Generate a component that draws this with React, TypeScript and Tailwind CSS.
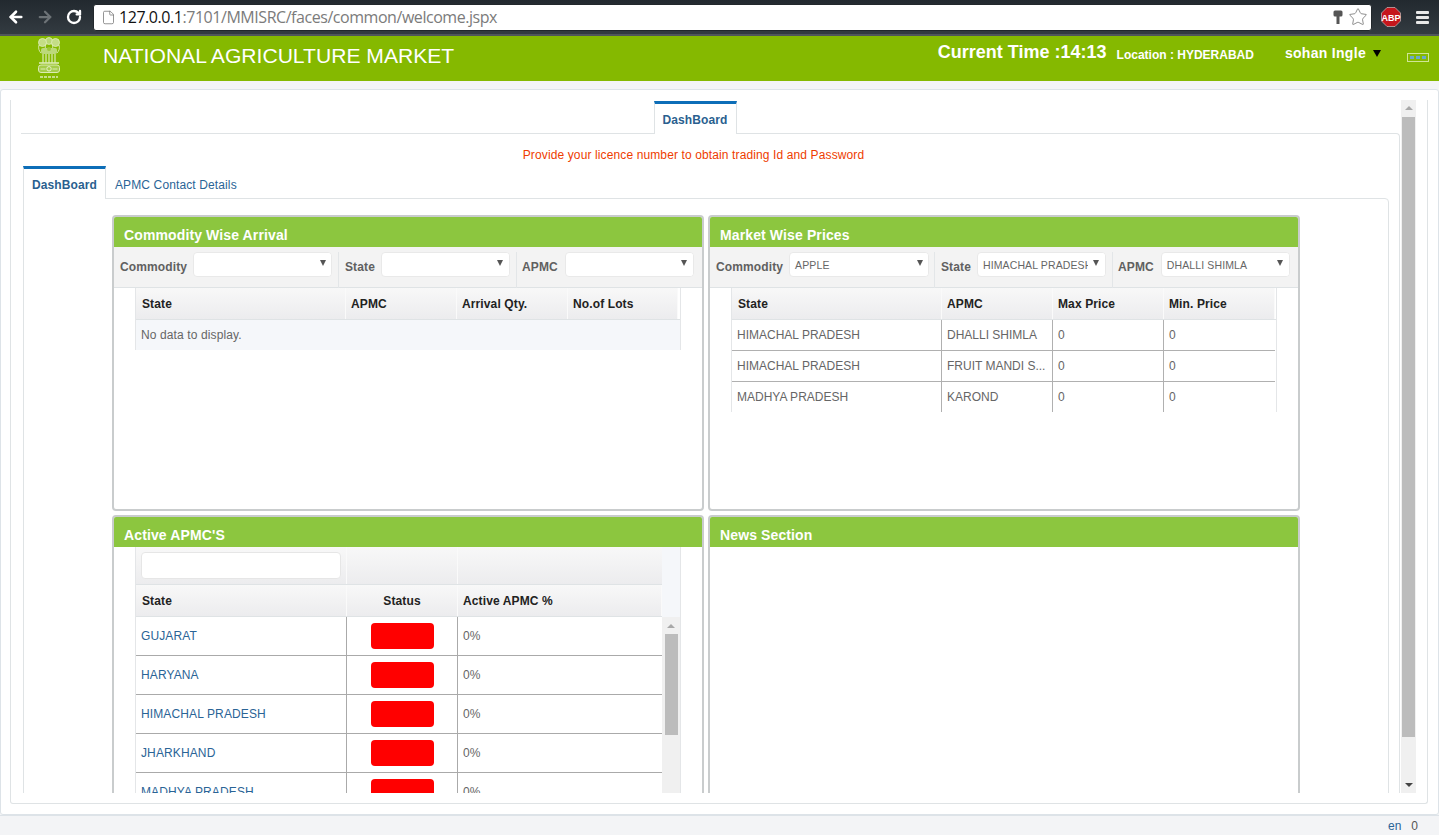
import React from 'react';
import { ArrowLeft, ArrowRight, RotateCw, File, Star } from 'lucide-react';

const priceRows = [
  ['HIMACHAL PRADESH', 'DHALLI SHIMLA', '0', '0'],
  ['HIMACHAL PRADESH', 'FRUIT MANDI S...', '0', '0'],
  ['MADHYA PRADESH', 'KAROND', '0', '0'],
];

const activeStates = ['GUJARAT', 'HARYANA', 'HIMACHAL PRADESH', 'JHARKHAND', 'MADHYA PRADESH'];

function Emblem() {
  return (
    <svg width="26" height="44" viewBox="0 0 26 44" fill="none" stroke="#dcebb4" strokeWidth="0.9">
      {/* lion heads */}
      <circle cx="13" cy="5" r="3.4" fill="#b9d775" />
      <circle cx="6.5" cy="6.5" r="4" fill="#c4dd86" />
      <circle cx="19.5" cy="6.5" r="4" fill="#c4dd86" />
      <path d="M3 9c-1 3 0 6 2 8M23 9c1 3 0 6-2 8M10 8c-1 2-1 4 0 6M16 8c1 2 1 4 0 6" />
      <rect x="5" y="12" width="16" height="6" rx="2" fill="#bcd97a" stroke="none" />
      <circle cx="13" cy="13" r="2" fill="#9cc63a" stroke="none" />
      {/* bodies */}
      <path d="M7 18v9M10 18v9M13 18v9M16 18v9M19 18v9" strokeWidth="1.2" />
      <path d="M3 27h20" strokeWidth="1.6" />
      {/* abacus */}
      <rect x="2.5" y="29" width="21" height="7.5" rx="2.5" fill="#a5cc4a" strokeWidth="1" />
      <circle cx="13" cy="32.8" r="2.2" stroke="#eef5d8" strokeWidth="0.9" />
      <path d="M4.5 33h5M16.5 33h5" strokeWidth="1.2" />
      {/* motto */}
      <path d="M4 41h18" stroke="#dcebb4" strokeWidth="1.4" strokeDasharray="3 1" />
    </svg>
  );
}

function ChromeBar() {
  return (
    <div className="flex h-[36px] items-center border-b-2 border-b-[#50565b] bg-gradient-to-b from-[#22292f] to-[#333b41]">
      <div className="ml-[7px] flex w-[86px] items-center">
        <ArrowLeft size={18} strokeWidth={3.5} className="text-white" />
        <ArrowRight size={18} strokeWidth={3} className="ml-[11px] text-[#6d7377]" />
        <RotateCw size={16} strokeWidth={3.5} className="ml-[12px] text-white" />
      </div>
      <div className="flex h-[27px] w-[1279px] items-center rounded-[3px] border border-[#22282c] bg-white pl-[7px] pr-[3px]">
        <File size={15} strokeWidth={1.25} className="text-[#777]" />
        <span className="ml-[3px] font-['Open_Sans',sans-serif] text-[16px] tracking-[-0.45px] text-[#7b7b7b]">
          <span className="text-[#111]">127.0.0.1</span>:7101/MMISRC/faces/common/welcome.jspx
        </span>
        <svg width="10" height="15" viewBox="0 0 10 15" className="ml-auto" fill="#555">
          <rect x="0.5" y="0.5" width="9" height="6" rx="1.5" />
          <rect x="3.5" y="6" width="3" height="8" />
        </svg>
        <Star size={20} strokeWidth={1} className="ml-[5px] text-[#777]" />
      </div>
      <svg width="20" height="20" viewBox="0 0 20 20" className="ml-[9px]">
        <polygon points="6,0.5 14,0.5 19.5,6 19.5,14 14,19.5 6,19.5 0.5,14 0.5,6" fill="#c5161c" stroke="#d8d8d8" strokeWidth="0.6" />
        <text x="10" y="13.5" textAnchor="middle" fontSize="9" fontWeight="700" fill="#fff" fontFamily="Liberation Sans">ABP</text>
      </svg>
      <div className="ml-[15px] flex w-[13px] flex-col gap-[2px]">
        <div className="h-[3px] rounded-[1px] bg-[#e8e8e8]" />
        <div className="h-[3px] rounded-[1px] bg-[#e8e8e8]" />
        <div className="h-[3px] rounded-[1px] bg-[#e8e8e8]" />
      </div>
    </div>
  );
}

function TopHeader() {
  return (
    <div className="flex h-[45px] bg-[#85b900] text-white">
      <div className="ml-[36px] w-[27px]">
        <Emblem />
      </div>
      <div className="ml-[40px] mt-[8px] text-[21.1px] leading-[24px]">NATIONAL AGRICULTURE MARKET</div>
      <div className="ml-auto flex items-start font-bold">
        <span className="mt-[6px] text-[18px] leading-[20px]">Current Time :14:13</span>
        <span className="ml-[10px] mt-[11px] text-[12px] leading-[16px]">Location : HYDERABAD</span>
        <span className="ml-[31px] mt-[9px] text-[14px] leading-[17px] tracking-[0.3px]">sohan Ingle</span>
        <div className="ml-[7px] mt-[14px] border-x-[4.5px] border-t-[7px] border-x-transparent border-t-black" />
        <div className="ml-[26px] mr-[10px] mt-[17px] flex h-[9px] w-[22px] items-center justify-center gap-[2px] border border-[#cfe596]">
          <div className="h-[3px] w-[4px] bg-[#6aa9c9]" />
          <div className="h-[3px] w-[4px] bg-[#6aa9c9]" />
          <div className="h-[3px] w-[4px] bg-[#6aa9c9]" />
        </div>
      </div>
    </div>
  );
}

function Caret() {
  return <div className="border-x-[3px] border-t-[6px] border-x-transparent border-t-[#555]" />;
}

function SelectBox({ value, width }: { value?: string; width: string }) {
  return (
    <div className={`${width} relative flex h-[25px] shrink-0 overflow-hidden rounded-[4px] border border-[#e9e9e9] bg-white pl-[5px] pt-[5px] text-[10.5px] leading-[14px] text-[#666]`}>
      <span className="whitespace-nowrap">{value}</span>
      <div className="absolute right-0 top-0 flex h-full w-[17px] items-start justify-center bg-white pt-[7px]">
        <Caret />
      </div>
    </div>
  );
}

function FilterGroup({ label, className, children }: { label: string; className: string; children: React.ReactNode }) {
  return (
    <div className={`${className} flex h-[40px] shrink-0 items-start border-r border-r-[#e3e6e8]`}>
      <span className="mt-[8px] whitespace-nowrap text-[12px] font-bold leading-[15px] text-[#606060]">{label}</span>
      {children}
    </div>
  );
}

function Panel({ title, children }: { title: string; children?: React.ReactNode }) {
  return (
    <div className="h-[296px] overflow-hidden rounded-[4px] border-2 border-[#c9cccd] bg-white">
      <div className="h-[30px] bg-[#8cc63f] pl-[10px] pt-[10px] text-[14px] font-bold leading-[17px] text-white">{title}</div>
      {children}
    </div>
  );
}

function HeaderCell({ label, className }: { label: string; className: string }) {
  return (
    <div className={`${className} flex h-[31px] items-center border-r border-r-[#fafafa] bg-gradient-to-b from-[#f8f8f8] to-[#ececee] pl-[5px] text-[12px] font-bold text-[#222] first:pl-[6px]`}>
      {label}
    </div>
  );
}

function ArrivalPanel() {
  return (
    <Panel title="Commodity Wise Arrival">
      <div className="flex h-[41px] border-b border-b-[#dfe3e5] bg-[#f3f3f3] pl-[6px] pt-[5px]">
        <FilterGroup label="Commodity" className="w-[219px]">
          <SelectBox width="w-[139px] ml-[6px]" />
        </FilterGroup>
        <FilterGroup label="State" className="w-[178px] pl-[6px]">
          <SelectBox width="w-[129px] ml-[6px]" />
        </FilterGroup>
        <div className="flex pl-[5px]">
          <span className="mt-[8px] text-[12px] font-bold leading-[15px] text-[#606060]">APMC</span>
          <SelectBox width="w-[129px] ml-[7px]" />
        </div>
      </div>
      <div className="ml-[21px] w-[546px] border-x border-x-[#e4e6e8]">
        <div className="flex border-b border-b-[#dfe3e5]">
          <HeaderCell label="State" className="w-[210px]" />
          <HeaderCell label="APMC" className="w-[111px]" />
          <HeaderCell label="Arrival Qty." className="w-[111px]" />
          <HeaderCell label="No.of Lots" className="w-[110px]" />
        </div>
        <div className="flex h-[30px] items-center bg-[#f5f7fa] pl-[5px] text-[12px] text-[#666]">No data to display.</div>
      </div>
    </Panel>
  );
}

function PricesPanel() {
  return (
    <Panel title="Market Wise Prices">
      <div className="flex h-[41px] border-b border-b-[#dfe3e5] bg-[#f3f3f3] pl-[6px] pt-[5px]">
        <FilterGroup label="Commodity" className="w-[219px]">
          <SelectBox value="APPLE" width="w-[140px] ml-[6px]" />
        </FilterGroup>
        <FilterGroup label="State" className="w-[178px] pl-[6px]">
          <SelectBox value="HIMACHAL PRADESH" width="w-[129px] ml-[6px]" />
        </FilterGroup>
        <div className="flex pl-[5px]">
          <span className="mt-[8px] text-[12px] font-bold leading-[15px] text-[#606060]">APMC</span>
          <SelectBox value="DHALLI SHIMLA" width="w-[129px] ml-[7px]" />
        </div>
      </div>
      <div className="ml-[21px] w-[546px] border-x border-x-[#e4e6e8]">
        <div className="flex border-b border-b-[#dfe3e5]">
          <HeaderCell label="State" className="w-[210px]" />
          <HeaderCell label="APMC" className="w-[111px]" />
          <HeaderCell label="Max Price" className="w-[111px]" />
          <HeaderCell label="Min. Price" className="w-[111px]" />
        </div>
        {priceRows.map((row, i) => (
          <div key={i} className="flex h-[31px] w-[543px] border-b border-b-[#b0b0b0] text-[12px] tracking-normal text-[#666] last:h-[30px] last:border-b-0">
            <div className="flex w-[210px] items-center border-r border-r-[#b0b0b0] pl-[5px]">{row[0]}</div>
            <div className="flex w-[111px] items-center border-r border-r-[#b0b0b0] pl-[5px]">{row[1]}</div>
            <div className="flex w-[111px] items-center border-r border-r-[#b0b0b0] pl-[5px]">{row[2]}</div>
            <div className="flex w-[111px] items-center pl-[5px]">{row[3]}</div>
          </div>
        ))}
      </div>
    </Panel>
  );
}

function ActivePanel() {
  return (
    <Panel title="Active APMC'S">
      <div className="ml-[21px] flex w-[546px] border-x border-x-[#e4e6e8]">
        <div className="w-[526px]">
          <div className="flex h-[38px] border-b border-b-[#dfe3e5] bg-gradient-to-b from-[#f8f8f8] to-[#ececee]">
            <div className="w-[211px] border-r border-r-[#fafafa] pl-[5px] pt-[5px]">
              <div className="h-[27px] w-[200px] rounded-[4px] border border-[#e6e6e6] bg-white" />
            </div>
            <div className="w-[111px] border-r border-r-[#fafafa]" />
          </div>
          <div className="flex border-b border-b-[#dfe3e5]">
            <HeaderCell label="State" className="w-[211px]" />
            <div className="flex h-[31px] w-[111px] items-center justify-center border-r border-r-[#fafafa] bg-gradient-to-b from-[#f8f8f8] to-[#ececee] text-[12px] font-bold text-[#222]">Status</div>
            <HeaderCell label="Active APMC %" className="w-[204px]" />
          </div>
          {activeStates.map((state) => (
            <div key={state} className="flex h-[39px] border-b border-b-[#aaaaaa] text-[12px]">
              <div className="flex w-[211px] items-center border-r border-r-[#aaaaaa] pl-[5px] text-[#2a6496]">{state}</div>
              <div className="flex w-[111px] justify-center border-r border-r-[#aaaaaa] pt-[6px]">
                <div className="h-[26px] w-[63px] rounded-[4px] bg-[#ff0000]" />
              </div>
              <div className="flex items-center pl-[5px] text-[#666]">0%</div>
            </div>
          ))}
        </div>
        <div className="w-[18px]">
          <div className="h-[70px] bg-[#f5f7fa]" />
          <div className="flex h-[200px] flex-col items-center bg-[#f0f0f0] px-[2px] pt-[7px]">
            <div className="border-x-[4px] border-b-[4px] border-x-transparent border-b-[#a8a8a8]" />
            <div className="mt-[6px] h-[101px] w-[13px] bg-[#bcbcbc]" />
          </div>
        </div>
      </div>
    </Panel>
  );
}

export default function App() {
  return (
    <div className="flex h-[835px] w-[1439px] flex-col overflow-hidden bg-[#f3f4f6] font-['Liberation_Sans',Arial,sans-serif]">
      <ChromeBar />
      <TopHeader />

      {/* Page frame */}
      <div className="mt-[8px] flex h-[726px] flex-col rounded-[3px] border border-[#dde3e8] bg-white pb-[10px] pl-[9px] pr-[10px] pt-[10px] tracking-[0.12px]">
        <div className="flex h-[704px] rounded-b-[3px] border-x border-b border-[#dfe3e5] pb-[10px]">
          <div className="h-[693px] w-[1390px] overflow-hidden pl-[10px] pr-[1px] pt-[1px]">
            {/* Outer tab */}
            <div className="flex justify-center">
              <div className="relative -mb-px ml-[-31px] flex h-[33px] w-[83px] items-center justify-center border-x border-x-[#dfe3e5] border-t-[3px] border-t-[#0d6eb8] bg-white pt-[2px] text-[12px] font-bold text-[#2a5f8f]">
                DashBoard
              </div>
            </div>
            <div className="rounded-tr-[4px] border-r border-t border-[#dfe3e5] pl-[2px] pr-[10px]">
              <div className="pr-[25px] pt-[13px] text-center text-[12px] leading-[16px] text-[#ee3c00]">
                Provide your licence number to obtain trading Id and Password
              </div>

              {/* Inner tabs */}
              <div className="mt-[3px] flex">
                <div className="relative -mb-px flex h-[33px] w-[83px] items-center justify-center border-x border-x-[#dfe3e5] border-t-[3px] border-t-[#0d6eb8] bg-white pt-[2px] text-[12px] font-bold text-[#2a5f8f]">
                  DashBoard
                </div>
                <div className="flex h-[32px] items-center pl-[9px] pt-[6px] text-[12px] text-[#2a6496]">APMC Contact Details</div>
              </div>
              <div className="rounded-tr-[4px] border border-[#dfe3e5] pb-[20px] pl-[88px] pt-[16px]">
                <div className="grid w-[1188px] grid-cols-[592px_592px] gap-[4px]">
                  <ArrivalPanel />
                  <PricesPanel />
                  <ActivePanel />
                  <Panel title="News Section" />
                </div>
              </div>
            </div>
          </div>

          {/* Page scrollbar */}
          <div className="flex h-[693px] w-[15px] flex-col items-center bg-[#f0f0f0] py-[6px]">
            <div className="border-x-[4px] border-b-[4px] border-x-transparent border-b-[#a8a8a8]" />
            <div className="mt-[7px] h-[620px] w-[13px] bg-[#bcbcbc]" />
            <div className="mt-auto border-x-[4px] border-t-[4px] border-x-transparent border-t-[#444]" />
          </div>
        </div>
      </div>

      {/* Footer */}
      <div className="flex h-[20px] items-center justify-end border-t border-t-[#dde3e8] pr-[21px] text-[12px] text-[#555]">
        <span className="text-[#2a6496]">en</span>
        <span className="ml-[10px]">0</span>
      </div>
    </div>
  );
}
